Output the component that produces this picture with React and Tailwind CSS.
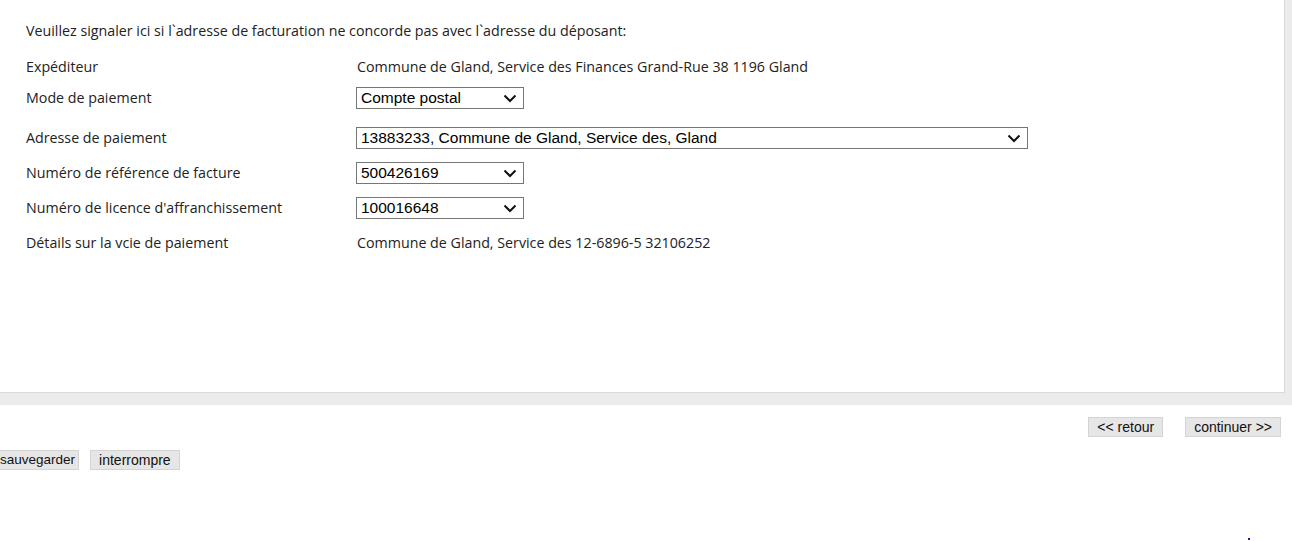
import React from 'react';

const labelFont = { fontFamily: '"Open Sans", "Noto Sans", sans-serif' };

function Chevron() {
  return (
    <svg width="14" height="9" viewBox="0 0 14 9" className="shrink-0">
      <path d="M1.5 1.5 L7 7 L12.5 1.5" fill="none" stroke="#111" strokeWidth="2" />
    </svg>
  );
}

function FakeSelect({ value, width }) {
  return (
    <div
      className={`ml-[-1px] flex h-[22px] items-center justify-between border border-[#767676] bg-white pl-[4px] pr-[6px] text-[15.5px] leading-none text-black font-['Liberation_Sans',Arial,sans-serif] ${width}`}
    >
      <span>{value}</span>
      <Chevron />
    </div>
  );
}

function Row({ label, children, h }) {
  return (
    <div className={`flex items-center ${h}`}>
      <div className="w-[331px] shrink-0">{label}</div>
      <div className="flex-1">{children}</div>
    </div>
  );
}

function Btn({ children, extra = '' }) {
  return (
    <button
      type="button"
      className={`h-[20px] border border-[#d4d4d4] bg-[#e6e6e6] leading-none text-[#111] font-['Liberation_Sans',Arial,sans-serif] ${extra || 'px-[8px] text-[14px]'}`}
    >
      {children}
    </button>
  );
}

export default function App() {
  return (
    <div className="h-[541px] w-[1292px] overflow-hidden bg-white">
      <div className="bg-[#ebebeb] pr-[7px] pb-[12px]">
        <div
          className="h-[393px] border-r border-b border-[#d9d9d9] bg-white pl-[26px] pt-[20px] text-[14.25px] text-[#222]"
          style={labelFont}
        >
          <div className="flex h-[22px] items-center">
            Veuillez signaler ici si l`adresse de facturation ne concorde pas avec l`adresse du déposant:
          </div>
          <div className="h-[14px]" />
          <Row label="Expéditeur" h="h-[22px]">
            Commune de Gland, Service des Finances Grand-Rue 38 1196 Gland
          </Row>
          <div className="h-[9px]" />
          <Row label="Mode de paiement" h="h-[22px]">
            <FakeSelect value="Compte postal" width="w-[168px]" />
          </Row>
          <div className="h-[18px]" />
          <Row label="Adresse de paiement" h="h-[22px]">
            <FakeSelect value="13883233, Commune de Gland, Service des, Gland" width="w-[672px]" />
          </Row>
          <div className="h-[13px]" />
          <Row label="Numéro de référence de facture" h="h-[22px]">
            <FakeSelect value="500426169" width="w-[168px]" />
          </Row>
          <div className="h-[13px]" />
          <Row label="Numéro de licence d'affranchissement" h="h-[22px]">
            <FakeSelect value="100016648" width="w-[168px]" />
          </Row>
          <div className="h-[13px]" />
          <Row label="Détails sur la vcie de paiement" h="h-[22px]">
            Commune de Gland, Service des 12-6896-5 32106252
          </Row>
        </div>
      </div>
      <div className="flex justify-end gap-[22px] pr-[11px] pt-[12px]">
        <Btn>&lt;&lt; retour</Btn>
        <Btn>continuer &gt;&gt;</Btn>
      </div>
      <div className="flex gap-[11px] pt-[13px]">
        <Btn extra="border-l-0 pl-0 pr-[3px] text-[13.5px]">sauvegarder</Btn>
        <Btn>interrompre</Btn>
      </div>
      <div className="flex justify-end pr-[42px] pt-[68px]">
        <div className="h-[2px] w-[2px] bg-[#1a1aa6]" />
      </div>
    </div>
  );
}
